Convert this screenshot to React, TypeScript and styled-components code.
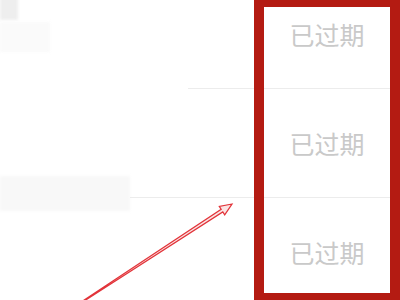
import styled, { createGlobalStyle } from 'styled-components'

const GlobalStyle = createGlobalStyle`
  html, body {
    margin: 0;
    padding: 0;
    background: #ffffff;
  }
  body {
    font-family: "Noto Sans CJK SC", "Noto Sans", sans-serif;
  }
`

const COLOR_MARK = '#b41b12'
const COLOR_ARROW = '#e2343a'
const COLOR_LINE = '#ececec'

const Page = styled.div`
  position: relative;
  display: flex;
  width: 400px;
  height: 300px;
  overflow: hidden;
  background: #ffffff;
`

const LeftColumn = styled.div`
  flex: 1;
  display: flex;
  flex-direction: column;
  margin-top: -20px;
`

const LeftRow = styled.div<{ lineFrom: number }>`
  position: relative;
  height: 108px;
  flex-shrink: 0;
  &::after {
    content: '';
    position: absolute;
    left: ${({ lineFrom }) => lineFrom}px;
    right: 0;
    bottom: -1px;
    height: 1px;
    background: ${COLOR_LINE};
  }
  & + & {
    margin-top: 1px;
  }
`

const Smudge = styled.div<{ tone: string; w: number; h: number; top: number }>`
  position: absolute;
  left: 0;
  top: ${({ top }) => top}px;
  width: ${({ w }) => w}px;
  height: ${({ h }) => h}px;
  background: ${({ tone }) => tone};
  filter: blur(1.5px);
`

const StatusColumn = styled.div`
  width: 146px;
  height: 300px;
  box-sizing: border-box;
  border-style: solid;
  border-color: ${COLOR_MARK};
  border-width: 7px 10px 7px 10px;
  overflow: hidden;
  display: flex;
  flex-direction: column;
`

const StatusList = styled.div`
  margin-top: -27px;
  display: flex;
  flex-direction: column;
`

const StatusRow = styled.div`
  height: 108px;
  flex-shrink: 0;
  display: flex;
  align-items: center;
  justify-content: center;
  border-bottom: 1px solid ${COLOR_LINE};
`

const StatusText = styled.span`
  font-family: "Noto Sans CJK SC", "Noto Sans", sans-serif;
  font-size: 25px;
  line-height: 1;
  color: #c9c9c9;
`

const ArrowLayer = styled.svg`
  position: absolute;
  left: 0;
  top: 0;
  pointer-events: none;
`

const rows = ['已过期', '已过期', '已过期']

const Arrow = () => (
  <ArrowLayer width={400} height={300} viewBox="0 0 400 300">
    <polygon
      points="75.2,306.8 222.8,211.9 224.7,214.8 232,204 219.3,206.4 221.2,209.3 74.8,306.2"
      fill="#fbe4e4"
      stroke={COLOR_ARROW}
      strokeWidth={1.2}
      strokeLinejoin="miter"
    />
  </ArrowLayer>
)

export default function App() {
  return (
    <>
      <GlobalStyle />
      <Page>
        <LeftColumn>
          <LeftRow lineFrom={188}>
            <Smudge tone="#eeeeee" w={18} h={40} top={0} />
            <Smudge tone="#fafafa" w={50} h={30} top={42} />
          </LeftRow>
          <LeftRow lineFrom={130}>
            <Smudge tone="#f8f8f8" w={130} h={35} top={87} />
          </LeftRow>
          <LeftRow lineFrom={0} />
        </LeftColumn>
        <StatusColumn>
          <StatusList>
            {rows.map((label, i) => (
              <StatusRow key={i}>
                <StatusText>{label}</StatusText>
              </StatusRow>
            ))}
          </StatusList>
        </StatusColumn>
        <Arrow />
      </Page>
    </>
  )
}
